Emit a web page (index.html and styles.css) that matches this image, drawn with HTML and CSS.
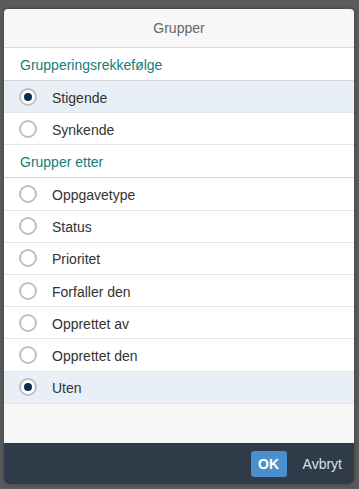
FILE: index.html
```html
<!DOCTYPE html>
<html lang="no">
<head>
  <meta charset="UTF-8" />
  <meta name="viewport" content="width=device-width, initial-scale=1.0"/>
  <title>Grupper</title>
  <link rel="stylesheet" href="styles.css">
</head>
<body>

<div class="dialog">
  <div class="dialog-header">Grupper</div>

  <div class="dialog-content">
    <div class="group-title">Grupperingsrekkefølge</div>
    <div class="option selected"><span class="radio"></span>Stigende</div>
    <div class="option"><span class="radio"></span>Synkende</div>

    <div class="group-title">Grupper etter</div>
    <div class="option"><span class="radio"></span>Oppgavetype</div>
    <div class="option"><span class="radio"></span>Status</div>
    <div class="option"><span class="radio"></span>Prioritet</div>
    <div class="option"><span class="radio"></span>Forfaller den</div>
    <div class="option"><span class="radio"></span>Opprettet av</div>
    <div class="option"><span class="radio"></span>Opprettet den</div>
    <div class="option selected"><span class="radio"></span>Uten</div>
  </div>

  <div class="dialog-footer">
    <button class="btn-ok">OK</button>
    <button class="btn-cancel">Avbryt</button>
  </div>
</div>

</body>
</html>
```

FILE: styles.css
```css
* { box-sizing: border-box; }

body {
  font-family: "Liberation Sans", Arial, sans-serif;
  margin: 0;
  padding: 9px 5px 5px 4px;
  height: 489px;
  background: #5b5b5b;
}

.dialog {
  height: 475px;
  background: #f7f7f7;
  border-radius: 4px;
  overflow: hidden;
  display: flex;
  flex-direction: column;
  box-shadow: 0 0 4px rgba(0,0,0,0.3);
}

.dialog-header {
  height: 39px;
  line-height: 39px;
  text-align: center;
  font-size: 14px;
  color: #666;
  border-bottom: 1px solid #d9d9d9;
  flex-shrink: 0;
}

.dialog-content {
  flex: 1;
}

.group-title {
  height: 33px;
  padding: 2px 0 0 16px;
  display: flex;
  align-items: center;
  font-size: 14px;
  color: #177c7a;
  background: #fff;
  border-bottom: 1px solid #d4d4d4;
}

.option {
  height: 32.2px;
  display: flex;
  align-items: center;
  padding: 2px 0 0 15px;
  font-size: 14px;
  color: #333;
  background: #fff;
  border-bottom: 1px solid #e5e5e5;
}

.option.selected {
  background: #e8eff6;
}

.radio {
  width: 18px;
  height: 18px;
  margin-top: -2px;
  border: 2px solid #bfbfbf;
  border-radius: 50%;
  background: #fff;
  margin-right: 15px;
  display: flex;
  align-items: center;
  justify-content: center;
}

.option.selected .radio::after {
  content: "";
  width: 8px;
  height: 8px;
  border-radius: 50%;
  background: #0b2d52;
}

.dialog-footer {
  height: 41px;
  flex-shrink: 0;
  background: #2f3b48;
  display: flex;
  align-items: center;
  justify-content: flex-end;
  padding-right: 6px;
  gap: 10px;
}

.dialog-footer button {
  font-family: inherit;
  font-size: 14px;
  border: none;
  cursor: pointer;
}

.btn-ok {
  height: 26px;
  width: 36px;
  background: #4a8fce;
  color: #fff;
  font-weight: bold;
  border-radius: 3px;
}

.btn-cancel {
  height: 26px;
  padding: 0 6px;
  background: transparent;
  color: #cfe3f5;
}
```
